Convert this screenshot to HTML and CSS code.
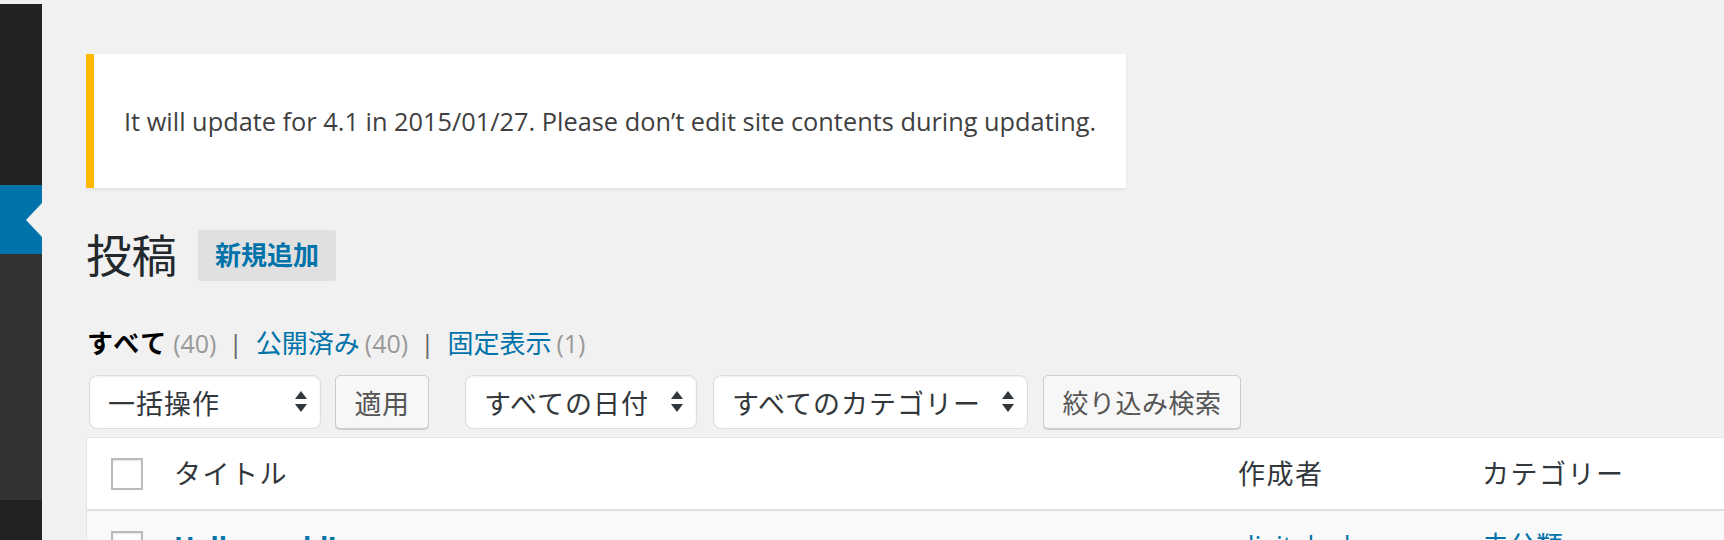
FILE: index.html
```html
<!DOCTYPE html>
<html lang="ja">
<head>
<meta charset="utf-8">
<title>投稿</title>
<link rel="stylesheet" href="styles.css">
</head>
<body>
<div class="layout">
  <nav class="sidebar">
    <div class="menu-top"></div>
    <div class="menu-current"></div>
    <div class="menu-sub"></div>
    <div class="menu-bottom"></div>
  </nav>
  <main class="content">
    <div class="notice"><p>It will update for 4.1 in 2015/01/27. Please don’t edit site contents during updating.</p></div>

    <div class="page-head">
      <h1 class="page-title">投稿</h1>
      <a class="add-new">新規追加</a>
    </div>

    <ul class="subsubsub">
      <li class="current"><span class="label">すべて</span><span class="count">(40)</span></li>
      <li class="sep">|</li>
      <li><a class="link label">公開済み</a><span class="count">(40)</span></li>
      <li class="sep">|</li>
      <li><a class="link label">固定表示</a><span class="count">(1)</span></li>
    </ul>

    <div class="tablenav">
      <div class="select select-bulk"><span>一括操作</span>
        <svg class="arrows" viewBox="0 0 12 22" width="12" height="22"><polygon points="0,8 6,0 12,8"/><polygon points="0,13 12,13 6,21"/></svg>
      </div>
      <button class="btn btn-apply">適用</button>
      <div class="select select-date"><span>すべての日付</span>
        <svg class="arrows" viewBox="0 0 12 22" width="12" height="22"><polygon points="0,8 6,0 12,8"/><polygon points="0,13 12,13 6,21"/></svg>
      </div>
      <div class="select select-cat"><span>すべてのカテゴリー</span>
        <svg class="arrows" viewBox="0 0 12 22" width="12" height="22"><polygon points="0,8 6,0 12,8"/><polygon points="0,13 12,13 6,21"/></svg>
      </div>
      <button class="btn btn-filter">絞り込み検索</button>
    </div>

    <div class="table">
      <div class="row row-head">
        <div class="cell cell-cb"><span class="checkbox"></span></div>
        <div class="cell cell-title">タイトル</div>
        <div class="cell cell-author">作成者</div>
        <div class="cell cell-cat">カテゴリー</div>
      </div>
      <div class="row row-alt">
        <div class="cell cell-cb"><span class="checkbox"></span></div>
        <div class="cell cell-title"><a class="row-title">Hello world!</a></div>
        <div class="cell cell-author"><a class="link">digitalcube</a></div>
        <div class="cell cell-cat"><a class="link">未分類</a></div>
      </div>
    </div>
  </main>
</div>
</body>
</html>
```

FILE: styles.css
```css
html, body {
  margin: 0;
  padding: 0;
  height: 100%;
  overflow: hidden;
}

body {
  background: #f1f1f1;
  font-family: "Open Sans", "Noto Sans CJK JP", sans-serif;
  color: #444;
}

.layout {
  display: flex;
  height: 100%;
}

/* ---------- sidebar ---------- */
.sidebar {
  width: 42px;
  flex: none;
  margin-top: 4px;
  display: flex;
  flex-direction: column;
}

.menu-top {
  height: 181px;
  background: #222;
}

.menu-current {
  height: 69px;
  background: #0073aa;
  position: relative;
}

.menu-current::after {
  content: "";
  position: absolute;
  right: 0;
  top: 50%;
  margin-top: -17px;
  border-style: solid;
  border-width: 17px 16px 17px 0;
  border-color: transparent #f1f1f1 transparent transparent;
}

.menu-sub {
  height: 246px;
  background: #333;
}

.menu-bottom {
  flex: 1;
  background: #222;
}

/* ---------- content ---------- */
.content {
  flex: 1;
  min-width: 0;
  padding: 54px 0 0 44px;
}

.notice {
  width: 1040px;
  box-sizing: border-box;
  background: #fff;
  border-left: 8px solid #ffba00;
  box-shadow: 0 2px 2px rgba(0, 0, 0, 0.06);
  padding: 49px 0 49px 30px;
}

.notice p {
  margin: 0;
  font-size: 25.35px;
  line-height: 36px;
  white-space: nowrap;
  color: #3f3f3f;
}

.page-head {
  display: flex;
  align-items: center;
  margin-top: 42px;
  height: 51px;
}

.page-title {
  margin: 0 21px 0 0;
  font-size: 45.5px;
  font-weight: 400;
  line-height: 51px;
  color: #23282d;
}

.add-new {
  display: block;
  height: 51px;
  line-height: 51px;
  padding: 0 17px;
  background: #e0e0e0;
  border-radius: 3px;
  color: #0073aa;
  font-weight: 700;
  font-size: 26px;
}

.subsubsub {
  list-style: none;
  margin: 44px 0 0 1px;
  padding: 0;
  display: flex;
  align-items: baseline;
  font-size: 26px;
  line-height: 36px;
  color: #666;
}

.subsubsub li {
  white-space: nowrap;
}

.subsubsub .current .label {
  color: #000;
  font-weight: 700;
  letter-spacing: 2px;
}

.subsubsub .count {
  margin-left: 5px;
  font-size: 25px;
  color: #999;
  font-weight: 400;
}

.subsubsub .sep {
  margin: 0 13px 0 12px;
  color: #666;
}

.link {
  color: #0073aa;
}

/* ---------- tablenav ---------- */
.tablenav {
  display: flex;
  align-items: flex-start;
  margin: 14px 0 0 3px;
  height: 55px;
}

.select {
  box-sizing: border-box;
  height: 54px;
  display: flex;
  align-items: center;
  justify-content: space-between;
  padding: 0 13px 0 18px;
  background: #fff;
  border: 1px solid #ddd;
  border-radius: 8px;
  box-shadow: inset 0 1px 2px rgba(0, 0, 0, 0.07);
  font-size: 27px;
  letter-spacing: 1px;
  color: #32373c;
}

.arrows {
  display: block;
  fill: #32373c;
}

.select-bulk { width: 232px; }
.select-date { width: 232px; margin-left: 36px; }
.select-cat { width: 315px; margin-left: 16px; }

.btn {
  box-sizing: border-box;
  height: 54px;
  margin: 0;
  padding: 0 10px;
  background: #f7f7f7;
  border: 1px solid #ccc;
  border-radius: 5px;
  box-shadow: 0 1px 0 #ccc;
  font-family: "Open Sans", "Noto Sans CJK JP", sans-serif;
  font-size: 26px;
  letter-spacing: 0.5px;
  color: #555;
}

.btn-apply { width: 94px; margin-left: 14px; font-size: 27px; }
.btn-filter { width: 198px; margin-left: 15px; }

/* ---------- table ---------- */
.table {
  margin-top: 7px;
  width: 1700px;
  background: #fff;
  border-top: 1px solid #e5e5e5;
  border-left: 1px solid #e5e5e5;
}

.row {
  display: grid;
  grid-template-columns: 87px 1064px 244px 1fr;
  align-items: center;
}

.row-head {
  box-sizing: border-box;
  height: 73px;
  padding-bottom: 3px;
  border-bottom: 2px solid #e1e1e1;
  font-size: 27px;
  letter-spacing: 1.5px;
  color: #32373c;
}

.row-head .cell-cb {
  padding-top: 3px;
}

.row-alt {
  background: #f9f9f9;
  align-items: start;
  padding-top: 20px;
  height: 80px;
  font-size: 27px;
  line-height: 30px;
}

.cell-cb {
  padding-left: 24px;
}

.checkbox {
  display: block;
  box-sizing: border-box;
  width: 32px;
  height: 32px;
  background: #fff;
  border: 2px solid #bbb;
  box-shadow: inset 0 1px 2px rgba(0, 0, 0, 0.1);
}

.row-title {
  color: #0073aa;
  font-weight: 700;
}
```
